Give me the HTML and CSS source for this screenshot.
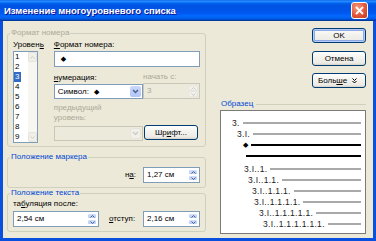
FILE: index.html
```html
<!DOCTYPE html>
<html lang="ru">
<head>
    <meta charset="UTF-8">
    <title>Изменение многоуровневого списка</title>
    <link rel="stylesheet" href="styles.css">
</head>
<body>
    <div class="window">
        <div class="titlebar">
            <span class="title">Изменение многоуровневого списка</span>
            <span class="close-btn">
                <svg width="9" height="9" viewBox="0 0 9 9"><path d="M1 1l7 7M8 1l-7 7" stroke="#fff" stroke-width="1.8"/></svg>
            </span>
        </div>
        <div class="client">
            <div class="left-col">
                <fieldset class="group group-format">
                    <legend class="off">Формат номера</legend>
                    <div class="format-body">
                        <div class="level-col">
                            <label>Уровен<u>ь</u></label>
                            <div class="listbox">
                                <ul class="items">
                                    <li>1</li>
                                    <li>2</li>
                                    <li><span class="sel">3</span></li>
                                    <li>4</li>
                                    <li>5</li>
                                    <li>6</li>
                                    <li>7</li>
                                    <li>8</li>
                                    <li>9</li>
                                </ul>
                                <div class="vscroll">
                                    <span class="sbtn"><svg width="5" height="3" viewBox="0 0 5 3"><path d="M.5 2.5l2-2 2 2" fill="none" stroke="#CFCDC2" stroke-width="1"/></svg></span>
                                    <span class="sbtn"><svg width="5" height="3" viewBox="0 0 5 3"><path d="M.5 .5l2 2 2-2" fill="none" stroke="#CFCDC2" stroke-width="1"/></svg></span>
                                </div>
                            </div>
                        </div>
                        <div class="fmt-col">
                            <label><u>Ф</u>ормат номера:</label>
                            <div class="textbox"><span class="diamond">◆</span></div>
                            <div class="fmt-row first">
                                <div class="field">
                                    <label><u>н</u>умерация:</label>
                                    <div class="combo">
                                        <span class="combo-text">Символ: <span class="diamond">◆</span></span>
                                        <span class="drop"><svg width="7" height="5" viewBox="0 0 7 5"><path d="M1 1l2.5 2.5L6 1" fill="none" stroke="#4D6185" stroke-width="1.5"/></svg></span>
                                    </div>
                                </div>
                                <div class="field">
                                    <label class="off">начать с:</label>
                                    <div class="spin short disabled">
                                        <span class="spin-text">3</span>
                                        <span class="spin-btns">
                                            <span><svg width="5" height="3" viewBox="0 0 5 3"><path d="M.5 2.5l2-2 2 2" fill="none" stroke="#CFCDC2"/></svg></span>
                                            <span><svg width="5" height="3" viewBox="0 0 5 3"><path d="M.5 .5l2 2 2-2" fill="none" stroke="#CFCDC2"/></svg></span>
                                        </span>
                                    </div>
                                </div>
                            </div>
                            <div class="fmt-row second">
                                <div class="field">
                                    <label class="off">предыдущий<br>уровень:</label>
                                    <div class="combo disabled">
                                        <span class="combo-text"></span>
                                        <span class="drop"><svg width="7" height="5" viewBox="0 0 7 5"><path d="M1 1l2.5 2.5L6 1" fill="none" stroke="#CFCDC2" stroke-width="1.5"/></svg></span>
                                    </div>
                                </div>
                                <button class="btn font-btn">Шр<u>и</u>фт...</button>
                            </div>
                        </div>
                    </div>
                </fieldset>

                <fieldset class="group group-marker">
                    <legend>Положение маркера</legend>
                    <div class="marker-row">
                        <label>н<u>а</u>:</label>
                        <div class="spin short">
                            <span class="spin-text">1,27 см</span>
                            <span class="spin-btns">
                                <span><svg width="5" height="3" viewBox="0 0 5 3"><path d="M.5 2.5l2-2 2 2" fill="none" stroke="#4D6185"/></svg></span>
                                <span><svg width="5" height="3" viewBox="0 0 5 3"><path d="M.5 .5l2 2 2-2" fill="none" stroke="#4D6185"/></svg></span>
                            </span>
                        </div>
                    </div>
                </fieldset>

                <fieldset class="group group-text">
                    <legend>Положение текста</legend>
                    <label>та<u>б</u>уляция после:</label>
                    <div class="text-row">
                        <div class="spin wide">
                            <span class="spin-text">2,54 см</span>
                            <span class="spin-btns">
                                <span><svg width="5" height="3" viewBox="0 0 5 3"><path d="M.5 2.5l2-2 2 2" fill="none" stroke="#4D6185"/></svg></span>
                                <span><svg width="5" height="3" viewBox="0 0 5 3"><path d="M.5 .5l2 2 2-2" fill="none" stroke="#4D6185"/></svg></span>
                            </span>
                        </div>
                        <label class="indent-label"><u>о</u>тступ:</label>
                        <div class="spin short">
                            <span class="spin-text">2,16 см</span>
                            <span class="spin-btns">
                                <span><svg width="5" height="3" viewBox="0 0 5 3"><path d="M.5 2.5l2-2 2 2" fill="none" stroke="#4D6185"/></svg></span>
                                <span><svg width="5" height="3" viewBox="0 0 5 3"><path d="M.5 .5l2 2 2-2" fill="none" stroke="#4D6185"/></svg></span>
                            </span>
                        </div>
                    </div>
                </fieldset>
            </div>

            <div class="right-col">
                <button class="btn default">OK</button>
                <button class="btn cancel">Отмена</button>
                <button class="btn more">
                    <span>Боль<u>ш</u>е</span>
                    <svg width="5" height="6" viewBox="0 0 5 6"><path d="M.5 .5l2 2 2-2M.5 3l2 2 2-2" fill="none" stroke="#000" stroke-width="1"/></svg>
                </button>
                <div class="sample-title">Образец</div>
                <div class="sample">
                    <div class="srow l1"><span>3.</span><span class="line"></span></div>
                    <div class="srow l2"><span>3.I.</span><span class="line"></span></div>
                    <div class="srow l3"><span class="diamond">◆</span><span class="line bold"></span></div>
                    <div class="srow l4"><span class="line bold"></span></div>
                    <div class="srow l5"><span>3.I..1.</span><span class="line"></span></div>
                    <div class="srow l6"><span>3.I..1.1.</span><span class="line"></span></div>
                    <div class="srow l7"><span>3.I..1.1.1.</span><span class="line"></span></div>
                    <div class="srow l8"><span>3.I..1.1.1.1.</span><span class="line"></span></div>
                    <div class="srow l9"><span>3.I..1.1.1.1.1.</span><span class="line"></span></div>
                    <div class="srow l10"><span>3.I..1.1.1.1.1.1.</span><span class="line"></span></div>
                </div>
            </div>
        </div>
    </div>
</body>
</html>
```

FILE: styles.css
```css
* {
    box-sizing: border-box;
}
body {
    margin: 0;
    font-family: "Liberation Sans", Arial, sans-serif;
    font-size: 8px;
    line-height: 10px;
    color: #000;
}
label {
    display: block;
}
.off {
    color: #ACA899;
}
.diamond {
    font-family: "DejaVu Sans", sans-serif;
    font-size: 7px;
}

/* window frame */
.window {
    width: 376px;
    height: 241px;
    display: flex;
    flex-direction: column;
    background-color: #0A50DF;
}
.titlebar {
    height: 21px;
    flex-shrink: 0;
    display: flex;
    align-items: center;
    justify-content: space-between;
    padding: 0 8px 0 4px;
    background: linear-gradient(to bottom, #0058EE 0%, #3593FF 5%, #127DFF 10%, #0262EE 16%, #0057E5 22%, #0054E3 30%, #0055EB 56%, #005BF5 66%, #026AFE 76%, #0062EF 86%, #0052D6 92%, #0040AB 96%, #003092 100%);
}
.title {
    color: #fff;
    font-weight: bold;
    font-size: 9.5px;
    text-shadow: 1px 1px #0F1089;
}
.close-btn {
    width: 17px;
    height: 17px;
    display: flex;
    align-items: center;
    justify-content: center;
    border: 1px solid #fff;
    border-radius: 3px;
    background: radial-gradient(circle at 35% 30%, #F29A7E 0%, #E2583C 55%, #C43A1E 100%);
}
.client {
    flex: 1;
    margin: 0 3px 3px;
    background-color: #ECE9D8;
    display: flex;
    padding: 7px 7px 0 4px;
}

/* group boxes */
.left-col {
    width: 199px;
    display: flex;
    flex-direction: column;
}
.group {
    margin: 0;
    padding: 0 5px;
    border: 1px solid #D0D0BF;
    border-radius: 3px;
    min-width: 0;
}
.group legend {
    padding: 0 1px;
    margin-left: -3px;
    line-height: 10px;
    color: #0046D5;
}
.group legend.off {
    color: #ACA899;
}
.group-format {
    height: 119px;
    padding-top: 2px;
}
.format-body {
    display: flex;
    gap: 10px;
}
.level-col label,
.fmt-col > label {
    margin-bottom: 1px;
}

/* level list */
.listbox {
    width: 25px;
    height: 92px;
    display: flex;
    border: 1px solid #7F9DB9;
    background-color: #fff;
}
.items {
    list-style-type: none;
    margin: 0;
    padding: 0 0 0 1px;
    width: 14px;
}
.items li {
    height: 10px;
}
.items .sel {
    display: inline-block;
    padding: 0 2px 0 1px;
    margin-left: -1px;
    background-color: #316AC5;
    color: #fff;
}
.vscroll {
    width: 9px;
    display: flex;
    flex-direction: column;
    justify-content: space-between;
    background-color: #F7F6F1;
}
.sbtn {
    height: 10px;
    display: flex;
    align-items: center;
    justify-content: center;
    background-color: #F0EFE8;
    border: 1px solid #E6E4DA;
    border-radius: 2px;
}

/* number format column */
.fmt-col {
    width: 152px;
}
.textbox {
    height: 16px;
    border: 1px solid #7F9DB9;
    background-color: #fff;
    display: flex;
    align-items: center;
    padding-left: 6px;
}
.fmt-row {
    display: flex;
    justify-content: space-between;
    align-items: flex-end;
}
.fmt-row.first {
    margin-top: 5px;
}
.fmt-row.second {
    margin-top: 4px;
}
.field label {
    margin-bottom: 1px;
}
.fmt-row.second .field label {
    margin-bottom: 3px;
}
.combo {
    width: 89px;
    height: 15px;
    display: flex;
    align-items: stretch;
    justify-content: space-between;
    border: 1px solid #7F9DB9;
    background-color: #fff;
    padding: 1px;
}
.combo-text {
    padding-left: 2px;
    display: flex;
    align-items: center;
    gap: 5px;
}
.drop {
    width: 11px;
    display: flex;
    align-items: center;
    justify-content: center;
    background: linear-gradient(to bottom, #C8D8FC, #B2C6F6);
    border-radius: 2px;
}
.combo.disabled {
    border-color: #C9C7BA;
    background-color: #EBEADB;
}
.combo.disabled .drop {
    background: #F1F0EA;
    border: 1px solid #E6E4DA;
}

/* spin edits */
.spin {
    height: 16px;
    display: flex;
    justify-content: space-between;
    border: 1px solid #7F9DB9;
    background-color: #fff;
    padding: 1px;
}
.spin.short {
    width: 57px;
}
.spin.wide {
    width: 86px;
}
.spin-text {
    display: flex;
    align-items: center;
    padding-left: 2px;
}
.spin-btns {
    width: 10px;
    display: flex;
    flex-direction: column;
}
.spin-btns span {
    flex: 1;
    display: flex;
    align-items: center;
    justify-content: center;
    background: linear-gradient(to bottom, #D3E0FC, #B7CBF7);
    border: 1px solid #fff;
    border-radius: 2px;
}
.spin.disabled {
    border-color: #C9C7BA;
    background-color: #EBEADB;
    color: #ACA899;
}
.spin.disabled .spin-btns span {
    background: #F1F0EA;
    border-color: #E8E6DE;
}

/* buttons */
.btn {
    height: 15px;
    padding: 0;
    font-family: inherit;
    font-size: 8px;
    color: #000;
    border: 1px solid #003C74;
    border-radius: 3px;
    background: linear-gradient(to bottom, #FFFFFF 0%, #F4F3EE 40%, #ECEBE6 85%, #D6D0C5 100%);
}
.font-btn {
    width: 54px;
    margin-right: 2px;
    margin-bottom: 1px;
}
.btn.default {
    box-shadow: inset 0 0 0 1px #B6CBF5, inset 0 0 0 2px #8EAAE6;
}

/* marker / text position */
.group-marker {
    margin-top: 5px;
    padding-top: 5px;
    padding-bottom: 4px;
}
.marker-row {
    display: flex;
    justify-content: flex-end;
    align-items: center;
}
.marker-row label {
    margin-right: 7px;
}
.group-text {
    padding-top: 1px;
    padding-bottom: 4px;
}
.group-text > label {
    margin-bottom: 2px;
}
.text-row {
    display: flex;
    align-items: center;
}
.indent-label {
    margin-left: 10px;
    margin-right: auto;
}

/* right column */
.right-col {
    margin-left: 14px;
    width: 146px;
    display: flex;
    flex-direction: column;
    align-items: flex-end;
}
.right-col .btn {
    width: 54px;
}
.btn.cancel {
    margin-top: 8px;
}
.btn.more {
    margin-top: 7px;
    display: flex;
    align-items: center;
    justify-content: space-between;
    padding: 0 8px 0 5px;
}
.sample-title {
    align-self: stretch;
    margin-top: 11px;
    padding-left: 1px;
    color: #0046D5;
    display: flex;
    align-items: center;
    gap: 3px;
}
.sample-title::after {
    content: "";
    flex: 1;
    border-top: 1px solid #D0D0BF;
}
.sample {
    align-self: stretch;
    margin-top: 1px;
    height: 124px;
    border: 1px solid #7A7A7A;
    background-color: #fff;
    padding: 6px 4px 0 0;
    display: flex;
    flex-direction: column;
}
.srow {
    height: 11px;
    display: flex;
    align-items: center;
    gap: 3px;
    color: #222;
    font-size: 8.5px;
    letter-spacing: 0.3px;
}
.srow .line {
    flex: 1;
    height: 2px;
    background-color: #A9A9A9;
}
.srow .line.bold {
    background-color: #000;
}
.srow .diamond {
    color: #000;
}
.l1 { padding-left: 11px; }
.l2 { padding-left: 16px; }
.l3 { padding-left: 22px; gap: 2px; }
.l4 { padding-left: 25px; }
.l5 { padding-left: 23px; margin-top: 2px; }
.l6 { padding-left: 27px; }
.l7 { padding-left: 31px; }
.l8 { padding-left: 33px; }
.l9 { padding-left: 38px; }
.l10 { padding-left: 42px; }
```
